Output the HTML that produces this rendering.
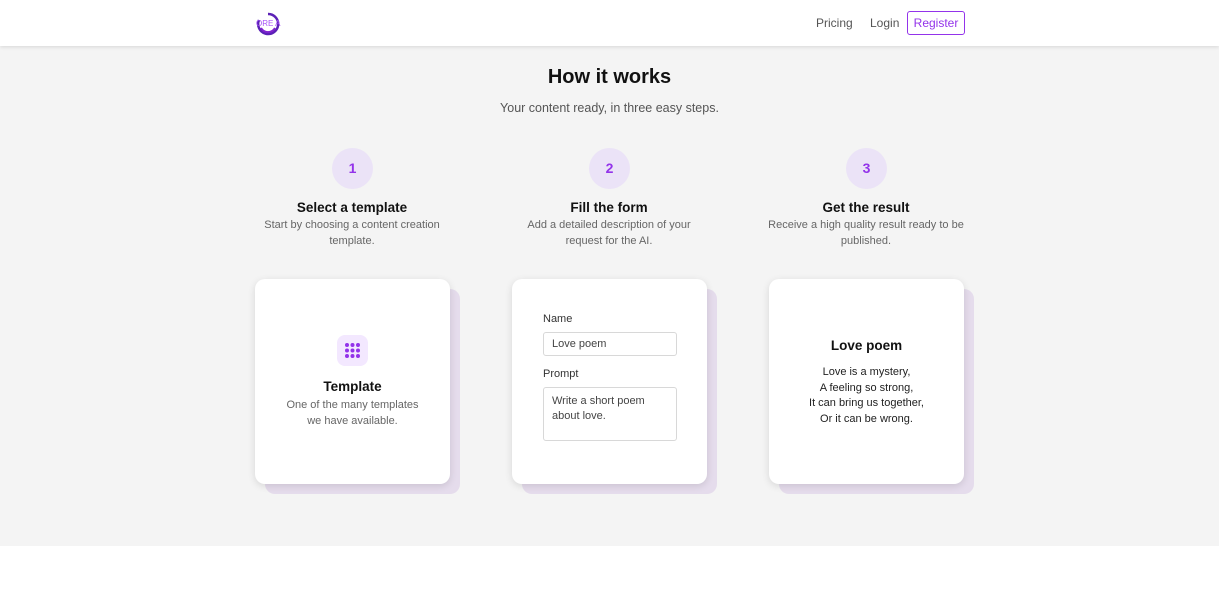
<!DOCTYPE html>
<html><head><style>
*{box-sizing:border-box;margin:0;padding:0}
body{width:1219px;height:600px;background:#fff;font-family:"Liberation Sans",sans-serif;position:relative;overflow:hidden}
.nav{position:absolute;top:0;left:0;width:1219px;height:46px;background:#fff;box-shadow:0 1px 4px rgba(0,0,0,.12);z-index:2}
.main{position:absolute;top:46px;left:0;width:1219px;height:500px;background:#f4f4f4}
.a{position:absolute}
.c{text-align:center}
.circ{position:absolute;width:41px;height:41px;border-radius:50%;background:#ebe3f7;color:#9333ea;font-size:14px;font-weight:bold;line-height:41px;text-align:center}
.card{position:absolute;top:279px;width:195px;height:205px;background:#fff;border-radius:10px;box-shadow:0 2px 8px rgba(0,0,0,.12)}
.back{position:absolute;top:289px;width:195px;height:205px;background:#e5dcec;border-radius:10px}
.t{font-weight:bold;font-size:13.5px;color:#111}
.s{font-size:11px;color:#666;line-height:15.5px}
.inp{position:absolute;border:1px solid #d8d8d8;border-radius:3px;font-size:11px;color:#444;padding:6px 8px;line-height:15px}
</style></head><body>
<div class="nav">
<svg class="a" style="left:255px;top:11px" width="26" height="25" viewBox="0 0 26 25"><path d="M13 3a10 10 0 1 1-9 6" fill="none" stroke="#5b21b6" stroke-width="2.5"/><path d="M6 17a8 8 0 0 0 14 0" fill="none" stroke="#7e22ce" stroke-width="2"/><text x="1" y="15" font-size="8" fill="#a855f7" font-family="Liberation Sans">ORE AI</text></svg>
<div class="a" style="left:816px;top:16px;font-size:12px;color:#555">Pricing</div>
<div class="a" style="left:870px;top:16px;font-size:12px;color:#555">Login</div>
<div class="a" style="left:907px;top:11px;width:58px;height:24px;border:1px solid #9333ea;border-radius:3px;color:#9333ea;font-size:12px;line-height:22px;text-align:center">Register</div>
</div>
<div class="main"></div>
<div class="a c" style="left:0;width:1219px;top:66px;font-size:20px;font-weight:bold;color:#111">How it works</div>
<div class="a c" style="left:0;width:1219px;top:101px;font-size:12.5px;color:#555">Your content ready, in three easy steps.</div>

<div class="circ" style="left:332px;top:148px">1</div>
<div class="circ" style="left:589px;top:148px">2</div>
<div class="circ" style="left:846px;top:148px">3</div>
<div class="a c t" style="left:252px;width:200px;top:200px">Select a template</div>
<div class="a c t" style="left:509px;width:200px;top:200px">Fill the form</div>
<div class="a c t" style="left:766px;width:200px;top:200px">Get the result</div>
<div class="a c s" style="left:252px;width:200px;top:218px">Start by choosing a content creation template.</div>
<div class="a c s" style="left:509px;width:200px;top:218px">Add a detailed description of your request for the AI.</div>
<div class="a c s" style="left:762px;width:208px;top:218px">Receive a high quality result ready to be published.</div>

<div class="back" style="left:265px"></div>
<div class="back" style="left:522px"></div>
<div class="back" style="left:779px"></div>

<div class="card" style="left:255px">
<div class="a" style="left:82px;top:56px;width:31px;height:31px;border-radius:8px;background:#f3e8ff">
<svg width="31" height="31"><g fill="#9333ea"><circle cx="10" cy="10" r="2"/><circle cx="15.5" cy="10" r="2"/><circle cx="21" cy="10" r="2"/><circle cx="10" cy="15.5" r="2"/><circle cx="15.5" cy="15.5" r="2"/><circle cx="21" cy="15.5" r="2"/><circle cx="10" cy="21" r="2"/><circle cx="15.5" cy="21" r="2"/><circle cx="21" cy="21" r="2"/></g></svg></div>
<div class="a c t" style="left:0;width:195px;top:100px">Template</div>
<div class="a c s" style="left:0;width:195px;top:119px">One of the many templates<br>we have available.</div>
</div>

<div class="card" style="left:512px">
<div class="a" style="left:31px;top:34px;font-size:11px;color:#333">Name</div>
<div class="inp" style="left:31px;top:53px;width:134px;height:24px;padding-top:4px">Love poem</div>
<div class="a" style="left:31px;top:89px;font-size:11px;color:#333">Prompt</div>
<div class="inp" style="left:31px;top:108px;width:134px;height:54px">Write a short poem about love.</div>
</div>

<div class="card" style="left:769px">
<div class="a c t" style="left:0;width:195px;top:59px">Love poem</div>
<div class="a c" style="left:0;width:195px;top:86px;font-size:11px;color:#222;line-height:15.5px">Love is a mystery,<br>A feeling so strong,<br>It can bring us together,<br>Or it can be wrong.</div>
</div>
</body></html>
